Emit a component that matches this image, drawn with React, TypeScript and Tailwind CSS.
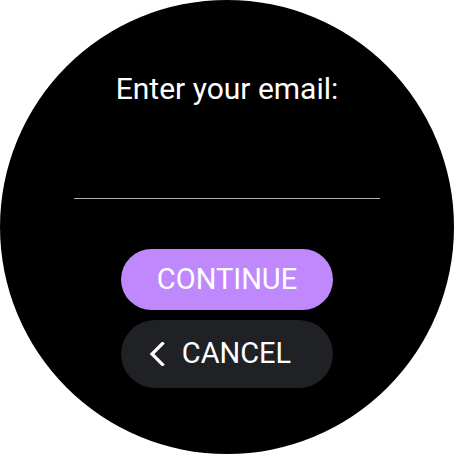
export default function App() {
  return (
    <div className="flex h-[454px] w-[454px] items-center justify-center bg-white">
      <div
        className="flex h-[454px] w-[454px] flex-col items-center rounded-full bg-black pt-[69px]"
        style={{ fontFamily: "Roboto, sans-serif" }}
      >
        <p className="text-[30px] leading-[40px] text-white">Enter your email:</p>
        <div className="mt-[89px] h-px w-[306px] bg-[#b0b0b0]" />
        <button className="mt-[50px] flex h-[61px] w-[212px] items-center justify-center rounded-full bg-[#bf88fc] text-[29px] text-white">
          CONTINUE
        </button>
        <button className="mt-[10px] flex h-[68px] w-[212px] items-center justify-center gap-[17px] rounded-full bg-[#202124] pr-[14px] text-[29px] text-white">
          <svg width="16" height="24" viewBox="0 0 16 24" fill="none">
            <path d="M13.5 1.5 L3 12 L13.5 22.5" stroke="white" strokeWidth="3.2" strokeLinecap="square" />
          </svg>
          CANCEL
        </button>
      </div>
    </div>
  );
}
